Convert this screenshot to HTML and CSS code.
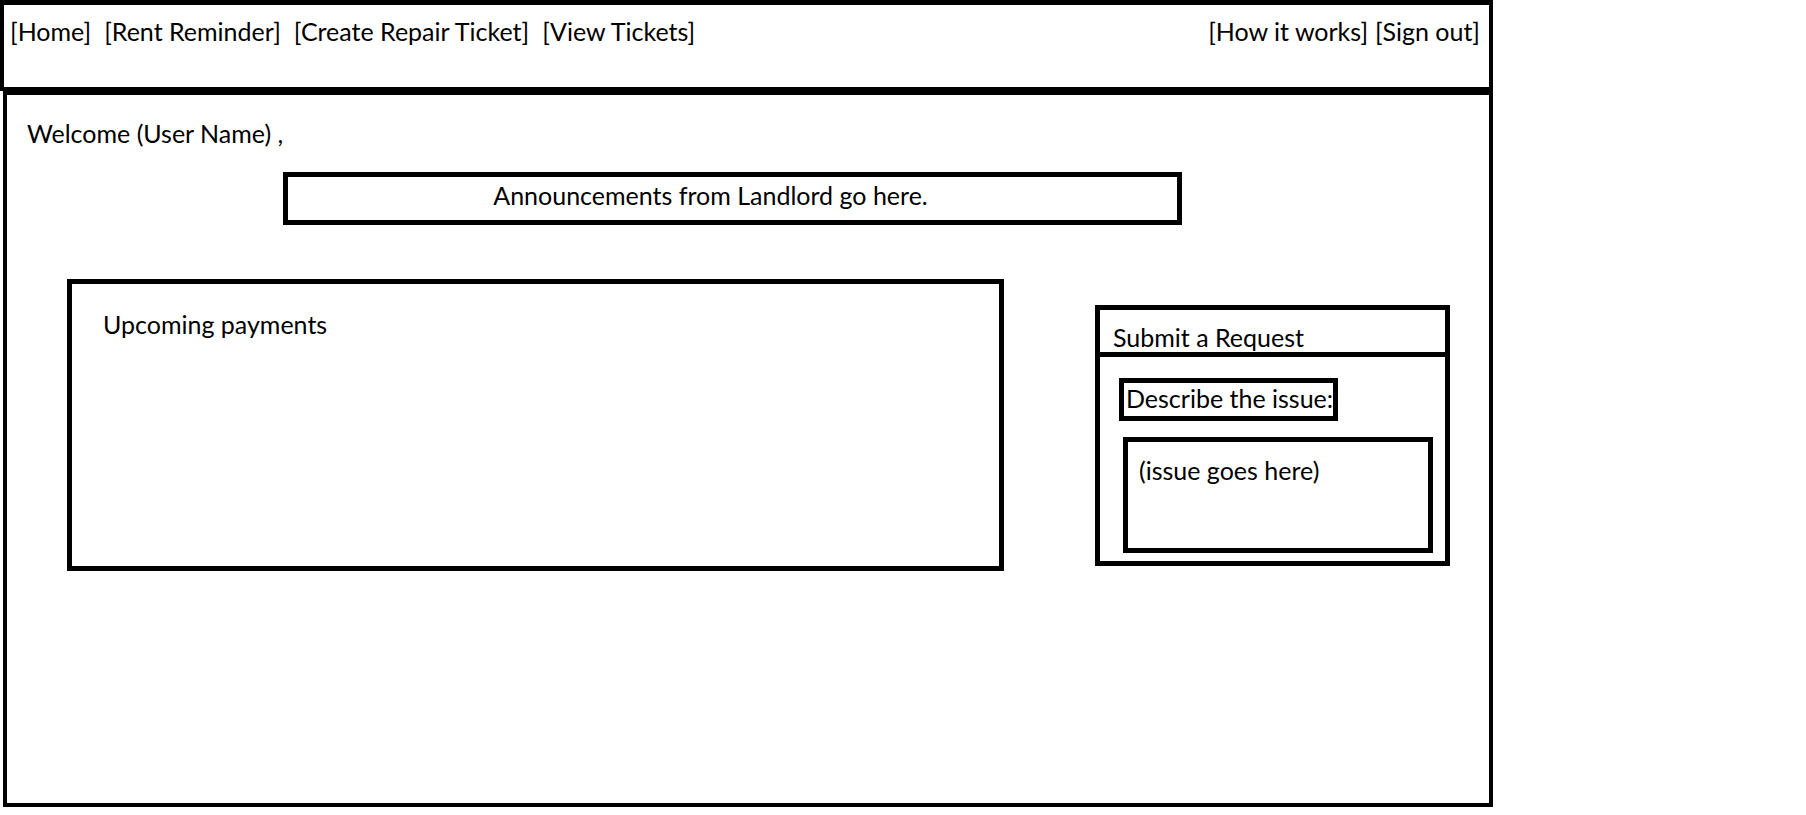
FILE: index.html
```html
<!DOCTYPE html>
<html lang="en">
<head>
    <meta charset="UTF-8">
    <meta name="viewport" content="width=device-width, initial-scale=1.0">
    <title>Tenant Home</title>

    <link rel="stylesheet" href="styles.css">
</head>
<body>
    <header class="top-bar">
        <nav class="nav-left">
            <a href="#" class="nav-link">[Home]</a>
            <a href="#" class="nav-link">[Rent Reminder]</a>
            <a href="#" class="nav-link">[Create Repair Ticket]</a>
            <a href="#" class="nav-link">[View Tickets]</a>
        </nav>

        <nav class="nav-right">
            <a href="#" class="nav-link">[How it works]</a>
            <a href="#" class="nav-link">[Sign out]</a>
        </nav>
    </header>

    <main class="page">
        <p class="welcome">Welcome (User Name) ,</p>

        <div class="announcements">Announcements from Landlord go here.</div>

        <section class="panels">
            <div class="payments">
                <p class="payments-title">Upcoming payments</p>
            </div>

            <form class="request">
                <div class="request-title">Submit a Request</div>

                <div class="request-body">
                    <label for="issue" class="issue-label">Describe the issue:</label>
                    <div id="issue" class="issue-box">(issue goes here)</div>
                </div>
            </form>
        </section>
    </main>
</body>
</html>
```

FILE: styles.css
```css
* {
    box-sizing: border-box;
}

body {
    margin: 0;

    font-family: Lato, 'Open Sans', sans-serif;
    font-size: 25px;
    line-height: 1.2;
    color: #000;

    background-color: #fff;
}

p {
    margin: 0;
}

.top-bar {
    width: 1493px;
    height: 91px;

    padding: 11px 9px 0 6px;

    border: 4px solid #000;
    border-top-width: 5px;

    display: flex;
    justify-content: space-between;
    align-items: flex-start;
}

.nav-left {
    display: flex;
    gap: 13px;
}

.nav-right {
    display: flex;
    gap: 7px;
}

.nav-link {
    color: #000;
    text-decoration: none;
}

.page {
    width: 1490px;
    height: 716px;
    margin-left: 3px;

    padding: 23px 0 0 20px;

    border: 4px solid #000;

    display: flex;
    flex-direction: column;
    align-items: flex-start;
}

.announcements {
    width: 899px;
    height: 53px;

    margin: 24px 0 0 256px;
    padding: 3px 44px 0 0;

    border: 5px solid #000;

    text-align: center;
}

.panels {
    margin: 54px 0 0 40px;

    display: flex;
    align-items: flex-start;
    gap: 91px;
}

.payments {
    width: 937px;
    height: 292px;

    padding: 25px 0 0 31px;

    border: 5px solid #000;
}

.request {
    width: 355px;
    height: 261px;
    margin: 26px 0 0 0;

    border: 5px solid #000;
}

.request-title {
    height: 47px;
    padding: 12px 0 0 13px;

    border-bottom: 5px solid #000;
}

.request-body {
    padding: 21px 12px 0 19px;

    display: flex;
    flex-direction: column;
    align-items: flex-start;
}

.issue-label {
    padding: 0 0 3px 2px;

    border: 5px solid #000;
}

.issue-box {
    width: 310px;
    height: 116px;

    margin: 16px 0 0 4px;
    padding: 13px 0 0 11px;

    border: 5px solid #000;
}
```
